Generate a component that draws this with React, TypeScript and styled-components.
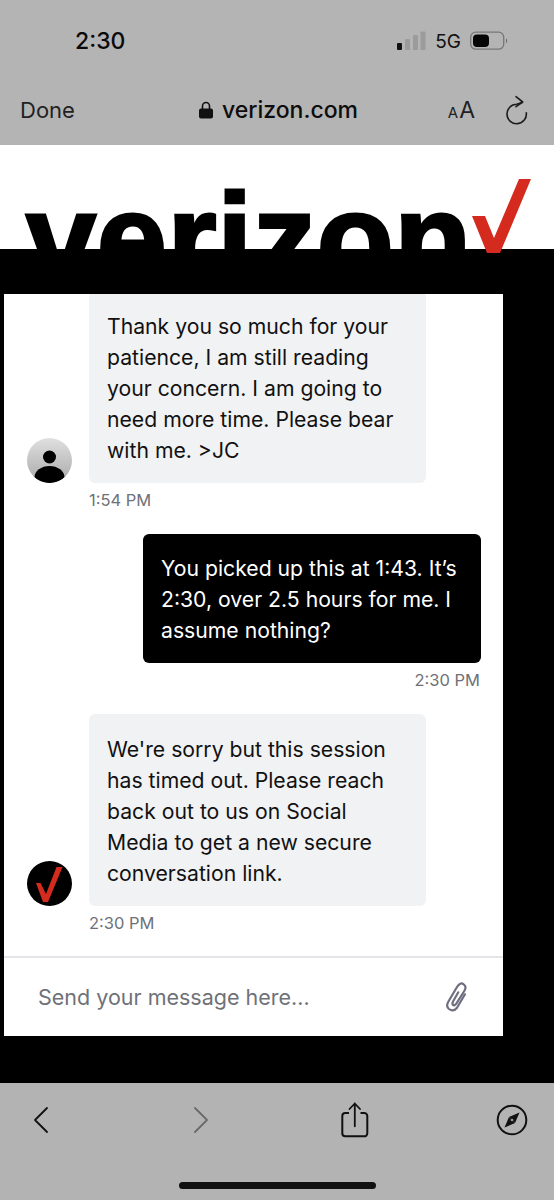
import React from 'react'
import styled, { createGlobalStyle } from 'styled-components'

const GlobalStyle = createGlobalStyle`
  html, body {
    margin: 0;
    padding: 0;
    background: #000;
  }
  * {
    box-sizing: border-box;
  }
`

type Message = {
  id: number
  mine?: boolean
  lines: string[]
  time: string
  avatar?: 'agent' | 'brand'
}

const messages: Message[] = [
  {
    id: 1,
    lines: [
      'Thank you so much for your',
      'patience, I am still reading',
      'your concern. I am going to',
      'need more time. Please bear',
      'with me. >JC',
    ],
    time: '1:54 PM',
    avatar: 'agent',
  },
  {
    id: 2,
    mine: true,
    lines: ['You picked up this at 1:43. It’s', '2:30, over 2.5 hours for me. I', 'assume nothing?'],
    time: '2:30 PM',
  },
  {
    id: 3,
    lines: [
      "We're sorry but this session",
      'has timed out. Please reach',
      'back out to us on Social',
      'Media to get a new secure',
      'conversation link.',
    ],
    time: '2:30 PM',
    avatar: 'brand',
  },
]

const App = () => {
  return (
    <Page>
      <GlobalStyle />
      <TopChrome>
        <StatusBar>
          <Clock>2:30</Clock>
          <StatusRight>
            <svg width="29" height="20" viewBox="0 0 29 20">
              <rect x="0" y="12" width="5" height="7" rx="1" fill="#111" />
              <rect x="8" y="8" width="5" height="11" rx="1" fill="#9b9b9b" />
              <rect x="16" y="4" width="5" height="15" rx="1" fill="#9b9b9b" />
              <rect x="23.5" y="0.5" width="5" height="18.5" rx="1" fill="#9b9b9b" />
            </svg>
            <Network>5G</Network>
            <svg width="38" height="20" viewBox="0 0 38 20">
              <rect x="0.7" y="1.2" width="33" height="17" rx="5" fill="none" stroke="#777" strokeWidth="1.3" />
              <rect x="3" y="3.5" width="16" height="12.5" rx="4" fill="#050505" />
              <path d="M36 7.5c1.4.4 1.4 4.1 0 4.5z" fill="#666" />
            </svg>
          </StatusRight>
        </StatusBar>
        <NavBar>
          <DoneLabel>Done</DoneLabel>
          <Address>
            <svg width="14" height="18" viewBox="0 0 14 18">
              <path d="M3.5 8V5a3.5 3.5 0 0 1 7 0v3" fill="none" stroke="#111" strokeWidth="1.6" />
              <rect x="0" y="7.5" width="14" height="10" rx="2" fill="#111" />
            </svg>
            <Domain>verizon.com</Domain>
          </Address>
          <NavTools>
            <TextSize>
              <SmallA>A</SmallA>
              <BigA>A</BigA>
            </TextSize>
            <svg width="24" height="32" viewBox="0 0 24 32">
              <path
                d="M20.3 18.7A9.7 9.7 0 1 1 10.7 10.3L16 8.5"
                fill="none"
                stroke="#1c1c1c"
                strokeWidth="1.6"
                strokeLinecap="round"
              />
              <path d="M10 2.7 16.7 8 10 12.7" fill="none" stroke="#1c1c1c" strokeWidth="1.6" strokeLinecap="round" strokeLinejoin="round" />
            </svg>
          </NavTools>
        </NavBar>
      </TopChrome>

      <LogoBand>
        <LogoClip>
          <LogoText>verizon</LogoText>
        </LogoClip>
        <LogoCheck viewBox="0 0 62 76" width="62" height="76">
          <polygon points="2,38 15,38 24,60 49,1 61,1 30,75 17,75" fill="#d52b1e" />
        </LogoCheck>
      </LogoBand>

      <Backdrop>
        <ChatCard>
          <Thread>
            {messages.map((m) => (
              <MessageBlock key={m.id} $mine={m.mine}>
                <BubbleRow>
                  {m.avatar === 'agent' && (
                    <Avatar $kind="agent">
                      <svg width="45" height="45" viewBox="0 0 45 45">
                        <circle cx="22.5" cy="19" r="6.5" fill="#000" />
                        <path d="M7.5 39.5a15 11.5 0 0 1 30 0a22.5 22.5 0 0 1-30 0z" fill="#000" />
                      </svg>
                    </Avatar>
                  )}
                  {m.avatar === 'brand' && (
                    <Avatar $kind="brand">
                      <svg width="45" height="45" viewBox="0 0 45 45">
                        <polygon points="9,22 13.5,22 19,33 29.5,6 35.5,6 21,41 16,41" fill="#d52b1e" />
                      </svg>
                    </Avatar>
                  )}
                  <Bubble $mine={m.mine}>
                    {m.lines.map((line) => (
                      <BubbleLine key={line}>{line}</BubbleLine>
                    ))}
                  </Bubble>
                </BubbleRow>
                <Stamp $mine={m.mine}>{m.time}</Stamp>
              </MessageBlock>
            ))}
          </Thread>
          <Composer>
            <Placeholder>Send your message here...</Placeholder>
            <svg width="28" height="34" viewBox="0 0 28 34">
              <path
                d="M23 14.3 15 27.7Q11.3 32.3 7 29Q3.7 26.3 6.3 21.7L15 7Q18.3 1.7 21.7 4.3Q25 6.7 22.3 11L14.3 23.7Q12.3 26.3 11 25Q9.7 23.7 11.3 21L16.3 12.3"
                fill="none"
                stroke="#6e6e80"
                strokeWidth="2.2"
                strokeLinecap="round"
                strokeLinejoin="round"
              />
            </svg>
          </Composer>
        </ChatCard>
      </Backdrop>

      <BottomChrome>
        <ToolRow>
          <ToolSlot $gap={0}>
            <svg width="18" height="28" viewBox="0 0 18 28">
              <path d="M15 2 3 14l12 12" fill="none" stroke="#111" strokeWidth="1.8" strokeLinecap="round" strokeLinejoin="round" />
            </svg>
          </ToolSlot>
          <ToolSlot $gap={120}>
            <svg width="18" height="28" viewBox="0 0 18 28">
              <path d="M3 2l12 12L3 26" fill="none" stroke="#6a6a6a" strokeWidth="1.8" strokeLinecap="round" strokeLinejoin="round" />
            </svg>
          </ToolSlot>
          <ToolSlot $gap={114}>
            <svg width="30" height="36" viewBox="0 0 30 36">
              <path d="M9 11H5.3a3 3 0 0 0-3 3v17.3a3 3 0 0 0 3 3h19a3 3 0 0 0 3-3V14a3 3 0 0 0-3-3H20.5" fill="none" stroke="#111" strokeWidth="2" />
              <path d="M14.8 24.3V1.5M9.5 7 14.8 1.5 20 7" fill="none" stroke="#111" strokeWidth="1.8" strokeLinecap="round" strokeLinejoin="round" />
            </svg>
          </ToolSlot>
          <ToolSlot $gap={117}>
            <svg width="32" height="32" viewBox="0 0 32 32">
              <circle cx="16" cy="16" r="14.3" fill="none" stroke="#111" strokeWidth="2" />
              <polygon points="23.5,8.5 19,19 13,13" fill="#111" />
              <polygon points="8.5,23.5 13,13 19,19" fill="#111" />
              <circle cx="16" cy="16" r="1.3" fill="#9a9a9a" />
            </svg>
          </ToolSlot>
        </ToolRow>
        <HomeBar />
      </BottomChrome>
    </Page>
  )
}

export default App

const Page = styled.div`
  width: 554px;
  height: 1200px;
  display: flex;
  flex-direction: column;
  overflow: hidden;
  font-family: Inter, 'Liberation Sans', sans-serif;
`

const TopChrome = styled.div`
  height: 145px;
  background: #b4b4b4;
  flex-shrink: 0;
`

const StatusBar = styled.div`
  height: 82px;
  display: flex;
  align-items: center;
  justify-content: space-between;
  padding: 0 46px 0 75px;
`

const Clock = styled.div`
  font-size: 23px;
  font-weight: 500;
  color: #0a0a0a;
`

const StatusRight = styled.div`
  display: flex;
  align-items: center;
  gap: 9px;
`

const Network = styled.div`
  font-size: 19px;
  font-weight: 400;
  color: #111;
`

const NavBar = styled.div`
  height: 63px;
  display: grid;
  grid-template-columns: 1fr auto 1fr;
  align-items: center;
  padding: 0 17px 8px 20px;
`

const DoneLabel = styled.div`
  font-size: 22px;
  color: #222;
`

const Address = styled.div`
  display: flex;
  align-items: center;
  gap: 9px;
`

const Domain = styled.div`
  font-size: 23px;
  font-weight: 500;
  color: #0d0d0d;
`

const NavTools = styled.div`
  display: flex;
  align-items: center;
  justify-content: flex-end;
  gap: 31px;
  padding-right: 7px;
`

const TextSize = styled.div`
  display: flex;
  align-items: baseline;
  gap: 1px;
  color: #222;
`

const SmallA = styled.span`
  font-size: 15px;
`

const BigA = styled.span`
  font-size: 23px;
`

const LogoBand = styled.div`
  position: relative;
  height: 104px;
  background: #fff;
  flex-shrink: 0;
`

const LogoClip = styled.div`
  height: 104px;
  overflow: hidden;
  padding-left: 26px;
`

const LogoText = styled.div`
  font-family: 'Liberation Sans', Arial, sans-serif;
  font-size: 126px;
  font-weight: 700;
  line-height: 126px;
  color: #000;
  margin-top: 31px;
  letter-spacing: 0.7px;
  -webkit-text-stroke: 3px #000;
`

const LogoCheck = styled.svg`
  position: absolute;
  left: 470px;
  top: 33px;
`

const Backdrop = styled.div`
  flex: 1;
  background: #000;
  padding: 45px 51px 47px 4px;
  display: flex;
`

const ChatCard = styled.div`
  flex: 1;
  background: #fff;
  display: flex;
  flex-direction: column;
  overflow: hidden;
`

const Thread = styled.div`
  flex: 1;
  display: flex;
  flex-direction: column;
  gap: 24px;
  margin-top: -3px;
  border-bottom: 2px solid #e4e5e8;
`

const MessageBlock = styled.div<{ $mine?: boolean }>`
  display: flex;
  flex-direction: column;
  align-items: ${(p) => (p.$mine ? 'flex-end' : 'flex-start')};
  padding: ${(p) => (p.$mine ? '0 22px 0 0' : '0 0 0 23px')};
`

const BubbleRow = styled.div`
  display: flex;
  align-items: flex-end;
  gap: 17px;
`

const Avatar = styled.div<{ $kind: 'agent' | 'brand' }>`
  width: 45px;
  height: 45px;
  border-radius: 50%;
  overflow: hidden;
  flex-shrink: 0;
  background: ${(p) => (p.$kind === 'agent' ? 'linear-gradient(180deg, #e0e0e0, #a9a9a9)' : '#000')};
`

const Bubble = styled.div<{ $mine?: boolean }>`
  width: ${(p) => (p.$mine ? '338px' : '337px')};
  padding: ${(p) => (p.$mine ? '19px 18px 17px' : '20px 18px 17px')};
  background: ${(p) => (p.$mine ? '#000' : '#f1f2f4')};
  color: ${(p) => (p.$mine ? '#fff' : '#111')};
  border-radius: 6px;
`

const BubbleLine = styled.div`
  font-size: 21.2px;
  line-height: 31px;
  white-space: nowrap;
`

const Stamp = styled.div<{ $mine?: boolean }>`
  font-size: 16.5px;
  line-height: 20px;
  color: #6f7178;
  margin-top: 7px;
  margin-left: ${(p) => (p.$mine ? '0' : '62px')};
  margin-right: ${(p) => (p.$mine ? '1px' : '0')};
`

const Composer = styled.div`
  height: 78px;
  flex-shrink: 0;
  display: flex;
  align-items: center;
  justify-content: space-between;
  padding: 0 33px 0 34px;
`

const Placeholder = styled.div`
  font-size: 21.5px;
  color: #6f7178;
`

const BottomChrome = styled.div`
  height: 117px;
  background: #b3b3b3;
  flex-shrink: 0;
  display: flex;
  flex-direction: column;
  align-items: center;
`

const ToolRow = styled.div`
  width: 100%;
  height: 74px;
  display: flex;
  align-items: center;
  padding-left: 21px;
`

const ToolSlot = styled.div<{ $gap: number }>`
  width: 40px;
  display: flex;
  justify-content: center;
  margin-left: ${(p) => p.$gap}px;
`

const HomeBar = styled.div`
  width: 197px;
  height: 7px;
  margin-top: 25px;
  border-radius: 4px;
  background: #111;
`
